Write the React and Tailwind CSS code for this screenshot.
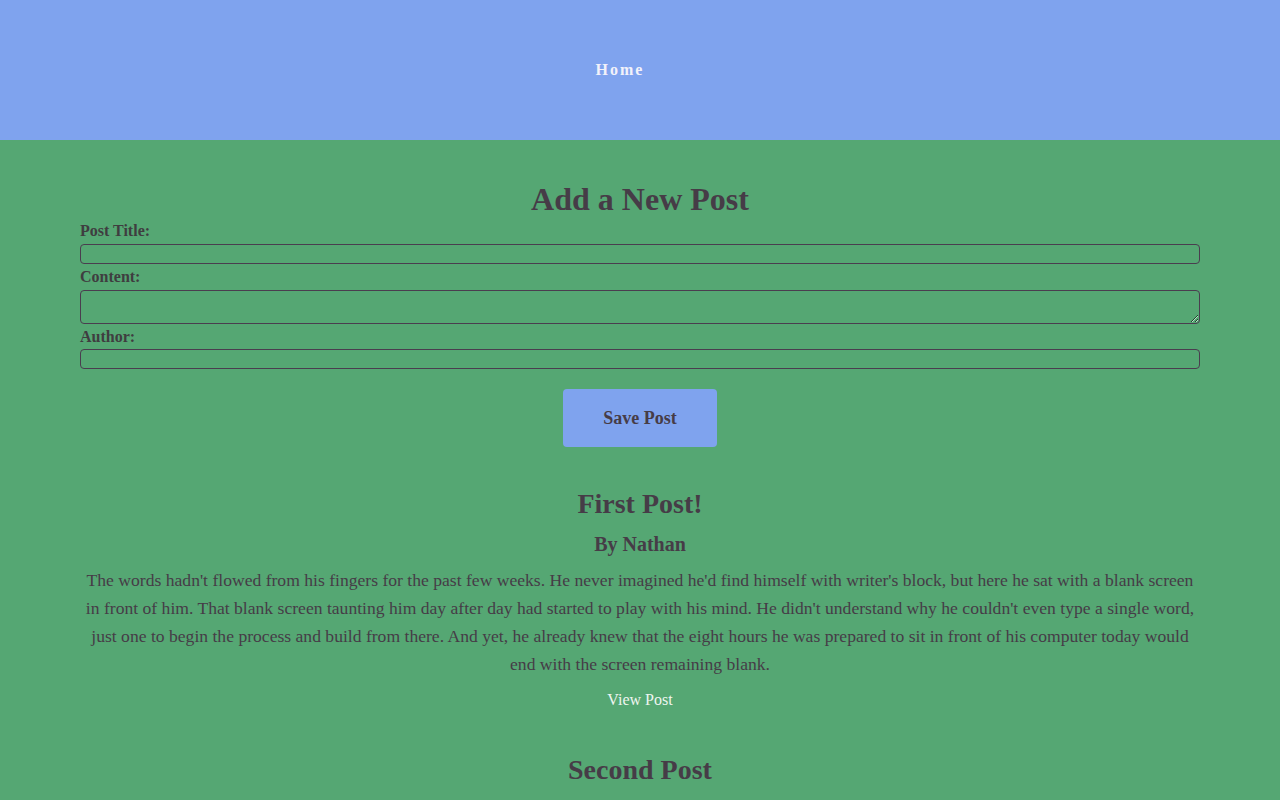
import React from 'react';

const posts = [
  {
    title: 'First Post!',
    author: 'Nathan',
    body: "The words hadn't flowed from his fingers for the past few weeks. He never imagined he'd find himself with writer's block, but here he sat with a blank screen in front of him. That blank screen taunting him day after day had started to play with his mind. He didn't understand why he couldn't even type a single word, just one to begin the process and build from there. And yet, he already knew that the eight hours he was prepared to sit in front of his computer today would end with the screen remaining blank.",
  },
  {
    title: 'Second Post',
    author: 'Nathan',
    body: '',
  },
];

export default function App() {
  return (
    <div className="min-h-screen bg-[#55a773] font-['Liberation_Serif',serif] text-[#463c47]">
      {/* header */}
      <header className="h-[140px] bg-[#7fa3ee] flex items-center justify-center">
        <nav className="pr-10">
          <a className="text-[16px] font-bold tracking-[2px] text-[#f2f2fa] leading-[18px]">Home</a>
        </nav>
      </header>

      <main className="px-20 pb-10">
        {/* new post form */}
        <h1 className="mt-[41px] text-[32px] leading-[37px] font-bold text-center">Add a New Post</h1>
        <form className="flex flex-col">
          <label className="mt-[4px] text-[16px] leading-[18px] font-bold text-[#3f3d40]">Post Title:</label>
          <input className="mt-[4px] h-[20px] border border-[#4a3d4f] rounded-[4px] bg-transparent" />
          <label className="mt-[4px] text-[16px] leading-[18px] font-bold text-[#3f3d40]">Content:</label>
          <textarea className="mt-[4px] h-[34px] border border-[#4a3d4f] rounded-[4px] bg-transparent" />
          <label className="mt-[4px] text-[16px] leading-[18px] font-bold text-[#3f3d40]">Author:</label>
          <input className="mt-[3px] h-[20px] border border-[#4a3d4f] rounded-[4px] bg-transparent" />
          <div className="mt-[20px] flex justify-center">
            <button type="button" className="w-[154px] h-[58px] bg-[#7fa3ee] rounded-[4px] text-[18px] font-bold text-[#463c47]">
              Save Post
            </button>
          </div>
        </form>

        {/* posts */}
        <div className="mt-[41px] flex flex-col gap-[45px]">
          {posts.map((p) => (
            <article key={p.title} className="flex flex-col items-center text-center">
              <h2 className="text-[28px] leading-[32px] font-bold">{p.title}</h2>
              <h3 className="mt-[13px] text-[20px] leading-[23px] font-bold">By {p.author}</h3>
              <p className="mt-[10px] text-[17.6px] leading-[28px]">{p.body}</p>
              <a className="mt-[13px] text-[16px] leading-[18px] text-[#eef5f0]">View Post</a>
            </article>
          ))}
        </div>
      </main>
    </div>
  );
}
